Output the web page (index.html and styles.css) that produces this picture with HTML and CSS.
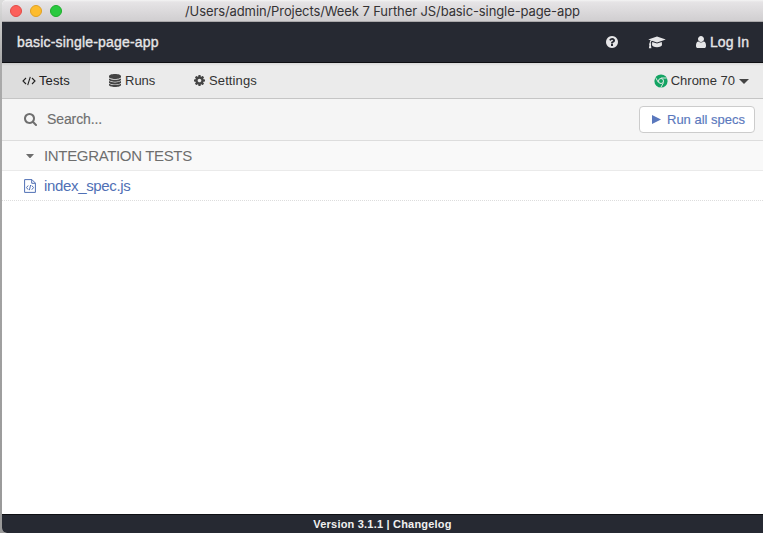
FILE: index.html
```html
<!DOCTYPE html>
<html lang="en">
<head>
<meta charset="utf-8">
<title>basic-single-page-app</title>
<link rel="stylesheet" href="styles.css">
</head>
<body>
<div class="window">
  <div class="titlebar">
    <div class="lights"><i class="light red"></i><i class="light yellow"></i><i class="light green"></i></div>
    <span class="path">/Users/admin/Projects/Week 7 Further JS/basic-single-page-app</span>
  </div>
  <header class="header">
    <span class="project">basic-single-page-app</span>
    <div class="links">
      <svg class="help" viewBox="0 0 1792 1792"><path d="M1024 1376v-192q0-14-9-23t-23-9h-192q-14 0-23 9t-9 23v192q0 14 9 23t23 9h192q14 0 23-9t9-23zm256-672q0-88-55.500-163t-138.500-116-170-41q-243 0-371 213-15 24 8 42l132 100q7 6 19 6 16 0 25-12 53-68 86-92 34-24 86-24 48 0 85.500 26t37.500 59q0 38-20 61t-68 45q-63 28-115.500 86.500t-52.500 125.500v36q0 14 9 23t23 9h192q14 0 23-9t9-23q0-19 21.500-49.500t54.500-49.500q32-18 49-28.500t46-35 44.500-48 28-60.500 12.500-81zm384 192q0 209-103 385.500t-279.500 279.500-385.500 103-385.500-103-279.500-279.500-103-385.500 103-385.500 279.500-279.500 385.500-103 385.500 103 279.500 279.500 103 385.500z"/></svg>
      <svg class="cap" viewBox="0 0 18 13"><path d="M9 .6 17.800 3.500 9 6.400 3.900 4.700C3.100 5.300 2.800 6.200 2.700 7.300c.6.400.7 1.100.2 1.600l.5 3.400H.9l.5-3.400c-.5-.5-.4-1.200.2-1.600.1-1.200.4-2.200 1.100-3L.2 3.500z"/><path d="M4.200 6 9 7.600 13.800 6l.2 3c0 1.200-2.200 2.200-5 2.200S4 10.200 4 9z"/></svg>
      <svg class="user" viewBox="256 128 1280 1536"><path d="M1536 1399q0 109-62.500 187t-150.500 78h-854q-88 0-150.500-78t-62.500-187q0-85 8.500-160.500t31.500-152 58.500-131 94-89 134.500-34.500q131 128 313 128t313-128q76 0 134.500 34.500t94 89 58.500 131 31.500 152 8.500 160.500zm-256-887q0 159-112.500 271.500t-271.500 112.500-271.500-112.500-112.500-271.500 112.500-271.500 271.500-112.500 271.500 112.500 112.500 271.500z"/></svg>
      <span class="login">Log In</span>
    </div>
  </header>
  <nav class="nav">
    <a class="tab active"><svg class="code" viewBox="0 0 14 10"><path d="M4 2 1 5l3 3M10 2l3 3-3 3M8.300.8 5.700 9.200"/></svg><span class="t-tests">Tests</span></a>
    <a class="tab runs"><svg class="db" viewBox="0 0 12 13"><path d="M0 2.200C0 1 2.700.1 6 .1s6 .9 6 2.100v.9c0 1.100-2.700 2-6 2s-6-.9-6-2zM0 4.500c1.200.9 3.500 1.300 6 1.300s4.800-.4 6-1.300v1.300c0 1.100-2.700 2-6 2s-6-.9-6-2zM0 7.100c1.200.9 3.500 1.300 6 1.300s4.800-.4 6-1.300v1.300c0 1.100-2.700 2-6 2s-6-.9-6-2zM0 9.700C1.200 10.600 3.500 11 6 11s4.800-.4 6-1.300v1.200c0 1.100-2.700 2-6 2s-6-.9-6-2z"/></svg><span class="t-runs">Runs</span></a>
    <a class="tab settings"><svg class="cog" viewBox="128 128 1536 1536"><path d="M1152 896q0-106-75-181t-181-75-181 75-75 181 75 181 181 75 181-75 75-181zm512-109v222q0 12-8 23t-20 13l-185 28q-19 54-39 91 35 50 107 138 10 12 10 25t-9 23q-27 37-99 108t-94 71q-12 0-26-9l-138-108q-44 23-91 38-16 136-29 186-7 28-36 28h-222q-14 0-24.500-8.500t-11.500-21.500l-28-184q-49-16-90-37l-141 107q-10 9-25 9-14 0-25-11-126-114-165-168-7-10-7-23 0-12 8-23 15-21 51-66.500t54-70.500q-27-50-41-99l-183-27q-13-2-21-12.500t-8-23.500v-222q0-12 8-23t19-13l186-28q14-46 39-92-40-57-107-138-10-12-10-24 0-10 9-23 26-36 98.500-107.500t94.500-71.500q13 0 26 10l138 107q44-23 91-38 16-136 29-186 7-28 36-28h222q14 0 24.500 8.500t11.500 21.500l28 184q49 16 90 37l142-107q9-9 24-9 13 0 25 10 129 119 165 170 7 8 7 22 0 12-8 23-15 21-51 66.500t-54 70.500q26 50 41 98l183 28q13 2 21 12.500t8 23.500z"/></svg><span class="t-settings">Settings</span></a>
    <div class="browser">
      <svg class="chrome" viewBox="0 0 14 14"><circle class="disc" cx="7" cy="7" r="6.600"/><path class="line" d="M7 4h5.800M4.400 8.500 1.600 3.500M9.600 8.500 6.800 13.500"/><circle class="hub" cx="7" cy="7" r="2.500"/></svg>
      <span class="t-chrome">Chrome 70</span>
      <svg class="caret" viewBox="0 0 10 5"><path d="M0 0h10L5 5z"/></svg>
    </div>
  </nav>
  <div class="search">
    <svg class="glass" viewBox="64 128 1664 1664"><path d="M1216 832q0-185-131.500-316.500t-316.500-131.500-316.500 131.500-131.500 316.500 131.500 316.500 316.500 131.500 316.500-131.500 131.500-316.500zm512 832q0 52-38 90t-90 38q-54 0-90-38l-343-342q-179 124-399 124-143 0-273.500-55.500t-225-150-150-225-55.500-273.500 55.500-273.500 150-225 225-150 273.500-55.500 273.500 55.500 225 150 150 225 55.500 273.500q0 220-124 399l343 343q37 37 37 90z"/></svg>
    <span class="placeholder">Search...</span>
    <button class="run"><svg viewBox="0 0 9 9"><path d="M0 0 9 4.500 0 9z"/></svg><span>Run all specs</span></button>
  </div>
  <div class="group"><svg class="caret" viewBox="0 0 8 4.500"><path d="M0 0h8L4 4.500z"/></svg><span>INTEGRATION TESTS</span></div>
  <div class="spec"><svg viewBox="0 0 12 14"><path d="M.6.600h7.300l3.500 3.500v9.300H.6zM7.700.600v3.700h3.700M4.200 6.500 2.500 8.600l1.700 2.100M7.800 6.500l1.700 2.100-1.700 2.100M6.600 6l-1.200 5.200"/></svg><span>index_spec.js</span></div>
  <main class="blank"></main>
  <footer class="footer"><span>Version 3.1.1 | Changelog</span></footer>
</div>
</body>
</html>
```
FILE: styles.css
```css
* { box-sizing: border-box; }
body {
  margin: 0;
  height: 533px;
  padding-left: 2px;
  overflow: hidden;
  background: linear-gradient(#ddd 0, #aaa 60px, #999 100%);
  font-family: "Liberation Sans", Arial, sans-serif;
  font-size: 13px;
}
svg { display: block; flex: none; fill: currentColor; }
span { white-space: nowrap; }
.window {
  display: flex;
  flex-direction: column;
  height: 533px;
  background: #fff;
  border-radius: 5px 0 0 5px;
  overflow: hidden;
}
.titlebar {
  display: grid;
  grid-template-columns: 183px 1fr;
  align-items: center;
  flex: none;
  height: 22px;
  background: linear-gradient(#f4f4f4 0, #e6e4e6 2px, #d0ced0 100%);
  border-bottom: 1px solid #aaa8aa;
}
.lights { display: flex; gap: 8px; padding: 1px 0 0 8px; }
.light { width: 12px; height: 12px; border-radius: 50%; border: 1px solid; }
.red { background: #fc605b; border-color: #e34a45; }
.yellow { background: #fdbc2e; border-color: #dfa023; }
.green { background: #2ac940; border-color: #1dad2b; }
.path { font-family: Inter, sans-serif; font-size: 13px; line-height: 20px; color: #343234; letter-spacing: -0.1px; padding-top: 1px; }
.header {
  display: flex;
  align-items: center;
  flex: none;
  height: 41px;
  padding: 0 14px 0 15px;
  background: #262932;
  border-bottom: 1px solid #0e0f13;
  color: #e6e6e8;
}
.project, .login { font-size: 14px; -webkit-text-stroke: 0.35px; }
.project { letter-spacing: 0.19px; }
.links { display: flex; align-items: center; margin-left: auto; }
.help { width: 14px; height: 14px; margin-right: 29px; }
.cap { width: 18px; height: 13px; margin-right: 30px; }
.user { width: 10px; height: 12px; margin-right: 4px; }
.nav {
  display: flex;
  flex: none;
  height: 36px;
  background: linear-gradient(#d9d9d9 0, #ebebeb 3px);
  border-bottom: 1px solid #c5c5c5;
  color: #333;
}
.tab { display: flex; align-items: center; padding-left: 20px; }
.active { width: 88px; background: linear-gradient(#cacaca 0, #ddd 3px); color: #222; }
.runs { width: 84px; padding-left: 19px; }
.code { width: 14px; height: 10px; margin-right: 3px; fill: none; stroke: currentColor; stroke-width: 1.1; }
.db { width: 12px; height: 13px; margin-right: 4px; color: #444; }
.cog { width: 11px; height: 11px; margin-right: 4px; color: #444; }
.t-tests, .t-settings { letter-spacing: 0.12px; }
.browser { display: flex; align-items: center; margin-left: auto; padding-right: 14px; }
.chrome { width: 14px; height: 14px; margin-right: 3px; }
.disc { fill: #13a463; }
.line { fill: none; stroke: #ebebeb; stroke-width: 0.9; }
.hub { fill: #13a463; stroke: #ebebeb; stroke-width: 1; }
.browser .caret { width: 10px; height: 5px; margin: 1px 0 0 4px; color: #444; }
.search {
  display: flex;
  align-items: center;
  flex: none;
  height: 42px;
  padding: 0 8px 0 22px;
  background: #f5f5f5;
  border-bottom: 1px solid #ddd;
  color: #6f6f6f;
}
.glass { width: 13px; height: 13px; margin-right: 10px; }
.placeholder { padding-bottom: 2px; font-size: 14px; letter-spacing: -0.1px; -webkit-text-stroke: 0.15px; }
.run {
  display: flex;
  align-items: center;
  width: 116px;
  height: 27px;
  margin-left: auto;
  padding: 0 0 0 12px;
  background: #fff;
  border: 1px solid #ccc;
  border-radius: 4px;
  color: #5a78bd;
  font: 13px "Liberation Sans", Arial, sans-serif;
  -webkit-text-stroke: 0.15px;
}
.run svg { width: 9px; height: 9px; margin-right: 6px; }
.group {
  display: flex;
  align-items: center;
  flex: none;
  height: 30px;
  padding-left: 24px;
  background: #f9f9f9;
  border-bottom: 1px solid #eaeaea;
  color: #6e6e6e;
  font-size: 15px;
  letter-spacing: -0.34px;
}
.group .caret { width: 8px; height: 4.500px; margin: 1px 10px 0 0; }
.spec {
  display: flex;
  align-items: center;
  flex: none;
  height: 30px;
  padding-left: 22px;
  border-bottom: 1px dotted #ddd;
  color: #5070b5;
  font-size: 15px;
  letter-spacing: -0.34px;
}
.spec svg { width: 12px; height: 14px; margin: 1px 8px 0 0; fill: none; stroke: currentColor; stroke-width: 1; }
.blank { flex: 1; }
.footer {
  display: flex;
  align-items: center;
  justify-content: center;
  flex: none;
  height: 19px;
  background: #262932;
  border-top: 1px solid #0e0f13;
  color: #f0f0f0;
  font-size: 11px;
  font-weight: bold;
  letter-spacing: 0.2px;
}
```
